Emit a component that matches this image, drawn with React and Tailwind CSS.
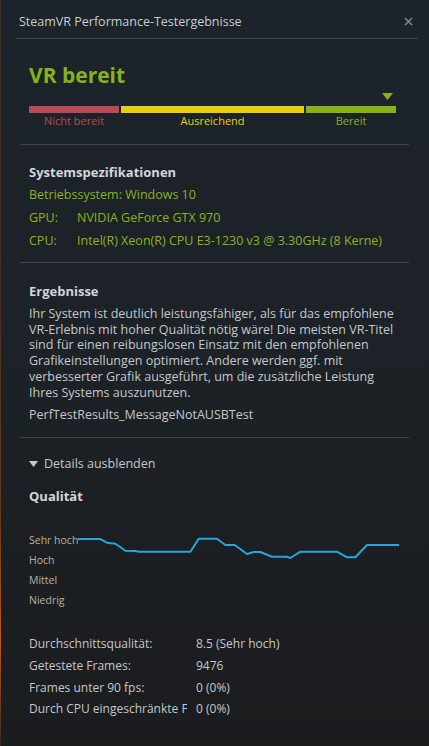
import React from "react";

const font = "font-['Open_Sans',sans-serif]";

const paragraph = [
  "Ihr System ist deutlich leistungsfähiger, als für das empfohlene",
  "VR-Erlebnis mit hoher Qualität nötig wäre! Die meisten VR-Titel",
  "sind für einen reibungslosen Einsatz mit den empfohlenen",
  "Grafikeinstellungen optimiert. Andere werden ggf. mit",
  "verbesserter Grafik ausgeführt, um die zusätzliche Leistung",
  "Ihres Systems auszunutzen.",
];

const stats = [
  { label: "Durchschnittsqualität:", value: "8.5 (Sehr hoch)" },
  { label: "Getestete Frames:", value: "9476" },
  { label: "Frames unter 90 fps:", value: "0 (0%)" },
  { label: "Durch CPU eingeschränkte Frames:", value: "0 (0%)" },
];

// quality line, coords relative to chart box (x from 79, y from 531)
const linePts = [
  [0, 9], [22, 9], [29, 12.7], [37.4, 13.7], [47.4, 20.7], [57.4, 21], [60.7, 21.7],
  [112.4, 21.7], [120.7, 8.7], [139, 8.7], [147.4, 15], [156.7, 15], [169, 24],
  [175.7, 22], [182.4, 22], [194, 26.7], [209, 26.7], [212.4, 28], [222.4, 21.7],
  [259, 21.7], [269, 27.3], [277.4, 27.3], [289, 15], [321, 15],
];

export default function App() {
  return (
    <div className={`w-[429px] h-[746px] flex bg-[linear-gradient(180deg,#1c232a_0%,#1c2227_45%,#1b1c1e_100%)] ${font}`}>
      <div className="w-[2px] bg-[linear-gradient(180deg,#3a3026_0%,#4a2f1c_40%,#6b3a16_70%,#c0581a_86%,#3a2a22_100%)]" />
      <div className="flex-1 flex flex-col">
        {/* header */}
        <div className="ml-[15px] mr-[11px] h-[39px] border-b border-[#3e4348] flex items-center justify-between pl-[3px] pr-[5px] pt-[6px]">
          <span className="text-[12.5px] text-[#c9cdd1]">SteamVR Performance-Testergebnisse</span>
          <svg width="9" height="9" viewBox="0 0 9 9" className="mt-[-1px]">
            <path d="M1 1L8 8M8 1L1 8" stroke="#8b9095" strokeWidth="1.4" />
          </svg>
        </div>

        {/* status */}
        <div className="ml-[19px] mr-[20px] border-b border-[#3e4348] px-[9px] pt-[24px] pb-[16px]">
          <div className="h-[24px] leading-[24px] text-[21px] font-bold text-[#86b31c]">VR bereit</div>
          <div className="mt-[6px] h-[7px] flex justify-end pr-[7px]">
            <svg width="11" height="7" viewBox="0 0 11 7">
              <path d="M0 0H11L5.5 7Z" fill="#86b31c" />
            </svg>
          </div>
          <div className="mt-[6px] w-[367px] flex gap-[2px] h-[7px]">
            <div className="w-[90px] bg-[#b84a55]" />
            <div className="w-[183px] bg-[#e6cf12]" />
            <div className="w-[90px] bg-[#86b31c]" />
          </div>
          <div className="mt-[1px] w-[367px] flex gap-[2px] text-[11px] leading-[14px]">
            <div className="w-[90px] text-center text-[#b84a55]">Nicht bereit</div>
            <div className="w-[183px] text-center text-[#e6cf12]">Ausreichend</div>
            <div className="w-[90px] text-center text-[#86b31c]">Bereit</div>
          </div>
        </div>

        {/* system specs */}
        <div className="ml-[19px] mr-[20px] border-b border-[#3e4348] px-[9px] pt-[18px] pb-[10px]">
          <div className="h-[18px] leading-[18px] text-[13px] font-bold text-[#d2d6da]">Systemspezifikationen</div>
          <div className="mt-[2px] text-[12.5px] leading-[23px] text-[#8ab31b]">
            <div>Betriebssystem: Windows 10</div>
            <div className="flex"><span className="w-[48px]">GPU:</span><span>NVIDIA GeForce GTX 970</span></div>
            <div className="flex"><span className="w-[48px]">CPU:</span><span>Intel(R) Xeon(R) CPU E3-1230 v3 @ 3.30GHz (8 Kerne)</span></div>
          </div>
        </div>

        {/* results */}
        <div className="ml-[19px] mr-[20px] border-b border-[#3e4348] px-[9px] pt-[19px] pb-[14px]">
          <div className="h-[18px] leading-[18px] text-[13px] font-bold text-[#d2d6da]">Ergebnisse</div>
          <div className="mt-[6px] text-[12.5px] leading-[15.7px] text-[#c4c8cb] whitespace-nowrap">
            {paragraph.map((l) => (
              <div key={l}>{l}</div>
            ))}
          </div>
          <div className="mt-[7px] text-[12.5px] leading-[16px] text-[#c4c8cb]">PerfTestResults_MessageNotAUSBTest</div>
        </div>

        {/* details */}
        <div className="ml-[19px] mr-[20px] px-[9px] pt-[17px]">
          <div className="h-[18px] flex items-center gap-[6px] text-[12.5px] text-[#c4c8cb]">
            <svg width="9" height="6" viewBox="0 0 9 6">
              <path d="M0 0H9L4.5 6Z" fill="#c4c8cb" />
            </svg>
            <span>Details ausblenden</span>
          </div>
          <div className="mt-[14px] h-[18px] leading-[18px] text-[13px] font-bold text-[#d2d6da]">Qualität</div>

          <div className="mt-[25px] flex">
            <div className="w-[49px] text-[10.5px] leading-[20px] text-[#b7b39f] whitespace-nowrap">
              <div>Sehr hoch</div>
              <div>Hoch</div>
              <div>Mittel</div>
              <div>Niedrig</div>
            </div>
            <svg width="322" height="80" viewBox="0 0 322 80">
              <polyline
                points={linePts.map((p) => p.join(",")).join(" ")}
                fill="none"
                stroke="#27a5e0"
                strokeWidth="2"
                strokeLinejoin="round"
              />
            </svg>
          </div>

          <div className="mt-[23px] text-[12px] leading-[21.7px] text-[#c4c8cb]">
            {stats.map((s) => (
              <div key={s.label} className="flex">
                <span className="w-[158px] mr-[9px] overflow-hidden whitespace-nowrap">{s.label}</span>
                <span>{s.value}</span>
              </div>
            ))}
          </div>
        </div>
      </div>
    </div>
  );
}
